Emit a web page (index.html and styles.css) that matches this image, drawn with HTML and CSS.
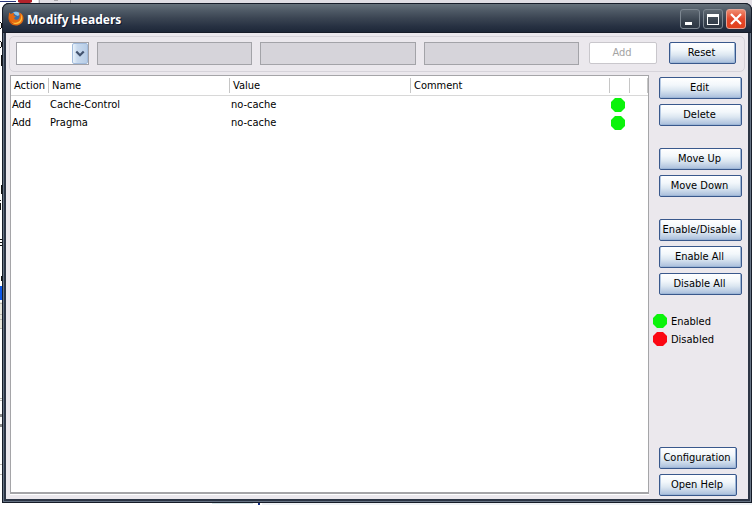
FILE: index.html
```html
<!DOCTYPE html>
<html lang="en">
<head>
<meta charset="utf-8">
<title>Modify Headers</title>
<link rel="stylesheet" href="styles.css">
</head>
<body>
<svg class="backdrop" aria-hidden="true">
  <path fill="#e0dde3" d="M38 0h2000v16H38z"/>
  <path fill="#fff" d="M0 0h38v3H0z"/>
  <path fill="#27357a" d="M0 1h16v1H0z"/>
  <path fill="#b3222b" d="M18 0h14v2l-2 1H20l-2-1z"/>
  <path fill="#aaa8ad" d="M39 0h1v3h-1zM70 0h1v3h-1zM54 0h4v1h-4z"/>
  <path fill="#111" d="M0 22h1v1H0zM1 23h1v5H1zM0 28h1v1H0zM0 41h1v1H0zM1 42h1v5H1zM0 47h1v1H0zM1 55h1v11H1zM1 185h1v9H1zM0 200h1v1H0zM0 203h1v7H0zM0 239h2v1H0zM0 242h2v1H0zM0 245h2v1H0zM1 276h1v5H1z"/>
  <path fill="#0b55e8" d="M0 286h2v14H0z"/>
  <path fill="#e9e7dc" d="M0 302h2v27H0z"/>
  <path fill="#bcbab3" d="M0 303h2v1H0zM0 314h2v1H0zM0 319h2v1H0zM0 328h2v1H0zM0 398h2v1H0zM0 400h2v1H0zM0 464h2v1H0zM0 474h2v1H0z"/>
  <path fill="#8b8b8b" d="M0 414h2v3H0zM0 424h2v3H0z"/>
  <path fill="#eef1f4" d="M262 503h2000v2H262z"/>
  <path fill="#d5e5e8" d="M212 503h41v1h-41z"/>
  <path fill="#102a80" d="M258 502h2v3h-2z"/>
</svg>

<main class="window">
  <header class="titlebar">
    <svg class="logo" viewBox="0 0 16 16" aria-hidden="true">
      <circle cx="8" cy="7.500" r="6.200" fill="#356fae"/>
      <path fill="#8fc5e8" d="M5 2.500C8 1 11 2 12 4L10 6 7.500 5z"/>
      <path fill="#e56a12" d="M1 2.500 3 4C4 3 5 2.700 6.200 3L5.500 5.200 8 6.500 6 8c.5 2 3.500 2.500 5 .5 1.200-1.800.8-4-.5-6C14 3 16 6 15.400 9.500 14.700 13 12 15.500 8 15.500 3.500 15.500.5 12 .5 8c0-2 .5-3.500.5-5.500z"/>
      <path fill="#ffc23a" d="M13 4c2 3 1.500 7-1.500 9-2.500 1.600-6 1.200-8-.8 3 1 6 .6 8-1.200 1.800-1.800 2-4.500 1.500-7z"/>
      <path fill="#b83c12" d="M1.200 8c.2 3 2 5 4.500 6C3 14 .8 11.500 1.200 8z"/>
    </svg>
    <h1>Modify Headers</h1>
    <div class="window-controls">
      <button class="control" type="button" aria-label="Minimize"><svg viewBox="0 0 18 18"><path fill="#fff" d="M4 12h7v3H4z"/></svg></button>
      <button class="control" type="button" aria-label="Maximize"><svg viewBox="0 0 18 18"><path fill="#fff" fill-rule="evenodd" d="M3 4h12v11H3zM4 7v7h10V7z"/></svg></button>
      <button class="control close" type="button" aria-label="Close"><svg viewBox="0 0 18 18"><path fill="none" stroke="#fff" stroke-width="2.200" d="m4 4 10 10M14 4 4 14"/></svg></button>
    </div>
  </header>

  <div class="content">
    <form class="editor">
      <div class="picker">
        <select aria-label="Action"><option></option><option>Add</option><option>Modify</option><option>Filter</option></select>
        <span class="picker-arrow"><svg viewBox="0 0 15 20" aria-hidden="true"><path fill="none" stroke="#42526e" stroke-width="2.400" d="m3.500 8 4 4 4-4"/></svg></span>
      </div>
      <input type="text" aria-label="Name" disabled>
      <input type="text" aria-label="Value" disabled>
      <input type="text" aria-label="Comment" disabled>
      <button class="button add" type="button" disabled>Add</button>
      <button class="button reset" type="button">Reset</button>
    </form>

    <div class="workspace">
      <div class="list">
        <table>
          <colgroup><col class="col-action"><col class="col-text"><col class="col-text"><col><col class="col-state"><col class="col-end"></colgroup>
          <thead>
            <tr><th>Action</th><th>Name</th><th>Value</th><th>Comment</th><th></th><th></th></tr>
          </thead>
          <tbody>
            <tr><td>Add</td><td>Cache-Control</td><td>no-cache</td><td></td><td><svg class="dot enabled" viewBox="0 0 14 14"><path d="M4 0h6l4 4v6l-4 4H4l-4-4V4z"/></svg></td><td></td></tr>
            <tr><td>Add</td><td>Pragma</td><td>no-cache</td><td></td><td><svg class="dot enabled" viewBox="0 0 14 14"><path d="M4 0h6l4 4v6l-4 4H4l-4-4V4z"/></svg></td><td></td></tr>
          </tbody>
        </table>
      </div>

      <aside class="sidebar">
        <div class="group">
          <button class="button" type="button">Edit</button>
          <button class="button" type="button">Delete</button>
        </div>
        <div class="group">
          <button class="button" type="button">Move Up</button>
          <button class="button" type="button">Move Down</button>
        </div>
        <div class="group">
          <button class="button" type="button">Enable/Disable</button>
          <button class="button" type="button">Enable All</button>
          <button class="button" type="button">Disable All</button>
        </div>
        <ul class="legend">
          <li><svg class="dot enabled" viewBox="0 0 14 14"><path d="M4 0h6l4 4v6l-4 4H4l-4-4V4z"/></svg><span>Enabled</span></li>
          <li><svg class="dot disabled" viewBox="0 0 14 14"><path d="M4 0h6l4 4v6l-4 4H4l-4-4V4z"/></svg><span>Disabled</span></li>
        </ul>
        <div class="group bottom">
          <button class="button" type="button">Configuration</button>
          <button class="button" type="button">Open Help</button>
        </div>
      </aside>
    </div>
  </div>
</main>
</body>
</html>
```
FILE: styles.css
```css
* { box-sizing: border-box; }

body {
  margin: 0;
  height: 100vh;
  padding: 3px 0 2px 2px;
  display: flex;
  overflow: hidden;
  background: #fff;
  color: #000;
  font: 11px/18px "DejaVu Sans Condensed", "Noto Sans", sans-serif;
}

button, input, select { font: inherit; margin: 0; }
svg { display: block; }

.backdrop {
  position: absolute;
  inset: 0;
  width: 100%;
  height: 100%;
  z-index: -1;
}

.window {
  flex: 1;
  min-width: 0;
  display: flex;
  flex-direction: column;
  padding: 0 4px 4px;
  border-radius: 7px 7px 0 0;
  background: #2c3545;
  box-shadow: inset 1px 1px #161c28, inset -1px -1px #161c28, inset 2px 0 #657283, inset -2px -2px #657283;
}

.titlebar {
  height: 30px;
  margin: 0 -4px;
  padding: 2px 5px 0;
  display: flex;
  align-items: center;
  gap: 3px;
  border-radius: 7px 7px 0 0;
  border: 1px solid #161c28;
  background: linear-gradient(#66717b, #4e5965 25%, #3b4553 50%, #273142 80%, #1d2738);
}
.logo { width: 16px; height: 16px; margin-bottom: 2px; flex: none; }
h1 {
  flex: 1;
  margin: 0;
  padding-top: 2px;
  color: #fff;
  font: bold 12px/18px "Noto Sans", sans-serif;
  text-shadow: 1px 1px #101a34;
}
.window-controls { display: flex; gap: 3px; }
.control {
  width: 20px;
  height: 20px;
  padding: 0;
  border: 1px solid #7d8791;
  border-radius: 3px;
  background: linear-gradient(#5e6872, #39434f 60%, #2c3643);
}
.close { border-color: #e6a496; background: linear-gradient(#ef8b70, #e4472a 50%, #e2411e); }

.content {
  flex: 1;
  min-height: 0;
  display: flex;
  flex-direction: column;
  padding: 3px;
  background: #ebe8ed;
}

.editor {
  display: flex;
  align-items: center;
  gap: 8px;
  height: 36px;
  padding: 0 8px 2px 6px;
  border: 1px solid #d6d3da;
  border-radius: 5px;
}
.picker { position: relative; width: 73px; height: 23px; flex: none; }
.picker select {
  appearance: none;
  width: 100%;
  height: 100%;
  padding: 0 18px 0 3px;
  border: 1px solid #a0a0a6;
  border-radius: 0;
  background: #fff;
}
.picker-arrow {
  position: absolute;
  top: 1px;
  right: 1px;
  bottom: 1px;
  width: 16px;
  border: 1px solid #a2bbdc;
  border-radius: 2px;
  background: linear-gradient(90deg, #eaf3fb, #c9daee 30%, #b8cde6);
  pointer-events: none;
}
.editor input {
  flex: 1;
  min-width: 0;
  height: 23px;
  padding: 0 3px;
  border: 1px solid #a3a3a8;
  background: #d6d4da;
}

.button {
  height: 22px;
  padding: 0 2px 0 0;
  border: 1px solid #39588c;
  border-radius: 2px;
  background: linear-gradient(#fff, #f2f7fb 35%, #dce7f1 60%, #a8bddb);
  box-shadow: inset 1px 0 #b5c9e3, inset -1px -1px #9db6d6;
  color: #000;
  line-height: 20px;
  white-space: nowrap;
}
.add { width: 68px; margin: 0 4px 0 2px; }
.reset { width: 67px; }
.button:disabled { border-color: #c9c7cc; background: #fff; box-shadow: none; color: #a3a3a3; }

.workspace {
  flex: 1;
  min-height: 0;
  display: flex;
  padding: 3px 3px 0 1px;
}
.list {
  flex: 1;
  min-width: 0;
  margin-bottom: 2px;
  border: 1px solid #a5a5a8;
  border-bottom-width: 2px;
  background: #fff;
  box-shadow: 0 1px #fff;
}
table { width: 100%; table-layout: fixed; border-collapse: collapse; }
.col-action { width: 38px; }
.col-text { width: 181px; }
.col-state { width: 20px; }
.col-end { width: 18px; }
th, td { height: 18px; padding: 0 1px; text-align: left; font-weight: normal; white-space: nowrap; }
th {
  height: 19px;
  padding: 2px 0 0 3px;
  line-height: 16px;
  border-bottom: 1px solid #d8d8d8;
  background: linear-gradient(#c6c6c6, #c6c6c6) right center / 1px 15px no-repeat;
}

.sidebar {
  width: 93px;
  flex: none;
  display: flex;
  flex-direction: column;
  padding: 2px 0 0 4px;
}
.group {
  display: flex;
  flex-direction: column;
  gap: 5px;
  margin: 0 0 22px 6px;
}
.legend { margin: -5px 0 0; padding: 0; list-style: none; }
.legend li { display: flex; align-items: center; gap: 4px; height: 18px; }
.legend span { padding-top: 2px; }
.bottom { width: 78px; margin-top: auto; margin-bottom: 0; }
.dot { width: 14px; height: 14px; flex: none; }
.enabled { fill: #0bf30b; }
.disabled { fill: #fb0713; }
```
